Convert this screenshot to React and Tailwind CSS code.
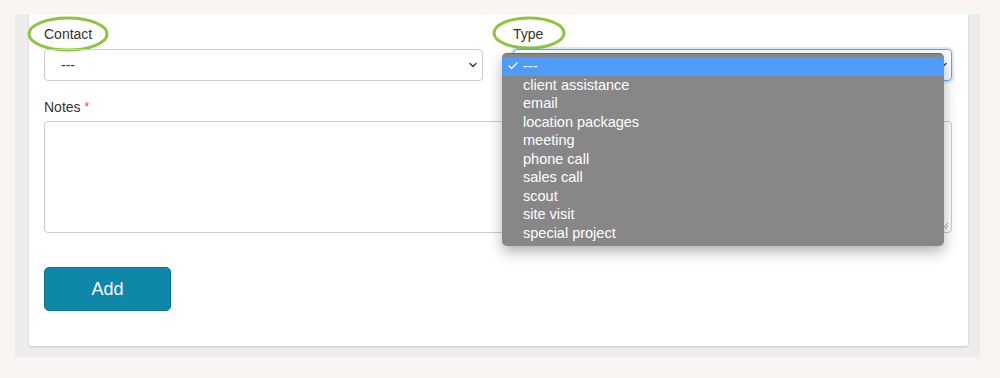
import { Check, ChevronDown } from 'lucide-react';

const types = [
  '---',
  'client assistance',
  'email',
  'location packages',
  'meeting',
  'phone call',
  'sales call',
  'scout',
  'site visit',
  'special project',
];

function Circled({ children, width, height, left, top }) {
  return (
    <span className="relative inline-block">
      <svg
        className="absolute pointer-events-none"
        style={{ left: -left, top: -top }}
        width={width}
        height={height}
        viewBox={`0 0 ${width} ${height}`}
      >
        <ellipse
          cx={width / 2}
          cy={height / 2}
          rx={width / 2 - 2}
          ry={height / 2 - 2}
          fill="none"
          stroke="#8cc63e"
          strokeWidth="3"
        />
      </svg>
      {children}
    </span>
  );
}

export default function App() {
  return (
    <div
      className="w-[1000px] h-[378px] bg-[#faf4f3] pt-[14px] px-[15px] text-[#333]"
      style={{ fontFamily: '"Liberation Sans", Arial, sans-serif' }}
    >
      <div className="w-[965px] bg-[#ececec] pl-[14px] pr-[12px] pb-[11px]">
        <div className="bg-white rounded-b-[3px] shadow-[0_1px_2px_rgba(0,0,0,0.15)] pl-[15px] pr-[16px] pt-[10px] pb-[35px]">
          {/* Contact / Type */}
          <div className="grid grid-cols-2 gap-[30px]">
            <div>
              <label className="block text-[14px] leading-[20px] h-[25px]">
                <Circled width={82} height={36} left={17} top={8}>Contact</Circled>
              </label>
              <div className="relative h-[32px] border border-[#ccc] rounded-[4px] flex items-center pl-[16px]">
                <span className="text-[14px]">---</span>
                <ChevronDown className="absolute right-[3px] top-[9px] w-[12px] h-[12px] text-[#444]" strokeWidth={3} />
              </div>
            </div>
            <div className="relative">
              <label className="block text-[14px] leading-[20px] h-[25px]">
                <Circled width={74} height={34} left={21} top={8}>Type</Circled>
              </label>
              <div className="relative h-[32px] border border-[#6aa5e8] rounded-[4px] shadow-[0_0_0_2px_rgba(120,170,240,0.25)]">
                <ChevronDown className="absolute right-[2px] top-[9px] w-[12px] h-[12px] text-[#444]" strokeWidth={3} />
              </div>

              {/* native select popup */}
              <div className="absolute left-[-11px] top-[29px] w-[442px] h-[193px] bg-[#878787] rounded-[5px] border-t border-[#6e6e6e] shadow-[0_6px_14px_rgba(0,0,0,0.3)] pt-[3px] z-10">
                {types.map((t, i) => (
                  <div
                    key={t}
                    className={`relative h-[18.5px] leading-[18.5px] pl-[21px] text-[14.5px] text-white ${
                      i === 0 ? 'bg-[#4f9bfa]' : ''
                    }`}
                  >
                    {i === 0 && (
                      <Check className="absolute left-[5px] top-[3px] w-[12px] h-[12px]" strokeWidth={2.5} />
                    )}
                    {t}
                  </div>
                ))}
              </div>
            </div>
          </div>

          {/* Notes */}
          <div className="mt-[16px]">
            <label className="block text-[14px] leading-[20px] mb-[4px]">
              Notes <span className="text-[#e23b3b] text-[12px] align-top">*</span>
            </label>
            <div className="relative h-[112px] border border-[#ccc] rounded-[4px]">
              <svg className="absolute right-[2px] bottom-[2px]" width="8" height="8" viewBox="0 0 8 8">
                <path d="M1 7 L7 1 M4 7 L7 4" stroke="#999" strokeWidth="1" />
              </svg>
            </div>
          </div>

          {/* Add */}
          <button className="mt-[34px] w-[127px] h-[44px] bg-[#0e87a8] border border-[#0b7491] rounded-[5px] text-white text-[18px]">
            Add
          </button>
        </div>
      </div>
    </div>
  );
}
